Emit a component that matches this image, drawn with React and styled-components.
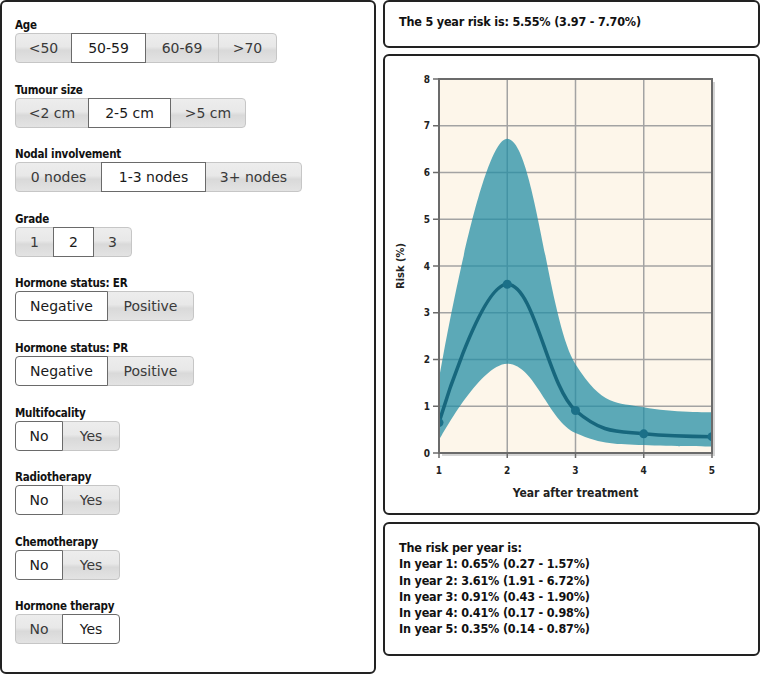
import React from "react";
import styled, { createGlobalStyle } from "styled-components";

const Global = createGlobalStyle`
  html, body { margin: 0; padding: 0; background: #ffffff; }
  * { box-sizing: border-box; }
`;

const Page = styled.div`
  display: flex;
  gap: 7px;
  width: 761px;
  height: 676px;
  font-family: "DejaVu Sans", "Liberation Sans", sans-serif;
`;

const Panel = styled.div`
  border: 2px solid #222;
  border-radius: 6px;
  background: #fff;
`;

const Left = styled(Panel)`
  width: 376px;
  height: 674px;
  padding: 16px 0 0 13px;
  display: flex;
  flex-direction: column;
  gap: 19.6px;
`;

const Right = styled.div`
  width: 377px;
  display: flex;
  flex-direction: column;
`;

const Section = styled.div`
  display: flex;
  flex-direction: column;
  align-items: flex-start;
`;

const Label = styled.div`
  font-family: "DejaVu Sans Condensed", "DejaVu Sans", sans-serif;
  font-weight: bold;
  font-size: 11.5px;
  line-height: 15px;
  color: #111;
  letter-spacing: -0.2px;
`;

const Group = styled.div`
  display: flex;
  height: 30px;
`;

const Btn = styled.div`
  width: ${(p) => p.$w}px;
  height: 30px;
  display: flex;
  align-items: center;
  justify-content: center;
  font-size: 14px;
  color: ${(p) => (p.$on ? "#1a1a1a" : "#3a3a3a")};
  border: 1px solid ${(p) => (p.$on ? "#6a6a6a" : "#c6c6c6")};
  margin-left: ${(p) => (p.$first ? 0 : -1)}px;
  position: relative;
  z-index: ${(p) => (p.$on ? 1 : 0)};
  background: ${(p) =>
    p.$on
      ? "#ffffff"
      : "linear-gradient(#ededed 0%, #e8e8e8 45%, #d9d9d9 58%, #e3e3e3 100%)"};
  border-radius: ${(p) =>
    p.$first ? "4px 0 0 4px" : p.$last ? "0 4px 4px 0" : "0"};
`;

const TopBox = styled(Panel)`
  height: 48px;
  display: flex;
  align-items: center;
  padding: 0 0 3px 14px;
`;

const ChartBox = styled(Panel)`
  height: 461px;
  margin-top: 6px;
  overflow: hidden;
`;

const BottomBox = styled(Panel)`
  height: 134px;
  margin-top: 7px;
  padding: 16px 0 0 14px;
`;

const Strong = styled.div`
  font-family: "DejaVu Sans Condensed", "DejaVu Sans", sans-serif;
  font-weight: bold;
  font-size: 12.5px;
  line-height: 16.3px;
  color: #111;
  letter-spacing: -0.2px;
`;

const sections = [
  { label: "Age", sel: 1, opts: [["<50", 57], ["50-59", 75], ["60-69", 74], [">70", 59]] },
  { label: "Tumour size", sel: 1, opts: [["<2 cm", 74], ["2-5 cm", 83], [">5 cm", 76]] },
  { label: "Nodal involvement", sel: 1, opts: [["0 nodes", 87], ["1-3 nodes", 105], ["3+ nodes", 97]] },
  { label: "Grade", sel: 1, opts: [["1", 39], ["2", 41], ["3", 39]] },
  { label: "Hormone status: ER", sel: 0, opts: [["Negative", 93], ["Positive", 87]] },
  { label: "Hormone status: PR", sel: 0, opts: [["Negative", 93], ["Positive", 87]] },
  { label: "Multifocality", sel: 0, opts: [["No", 48], ["Yes", 58]] },
  { label: "Radiotherapy", sel: 0, opts: [["No", 48], ["Yes", 58]] },
  { label: "Chemotherapy", sel: 0, opts: [["No", 48], ["Yes", 58]] },
  { label: "Hormone therapy", sel: 1, opts: [["No", 48], ["Yes", 58]] },
];

const mean = [0.65, 3.61, 0.91, 0.41, 0.35];
const lower = [0.27, 1.91, 0.43, 0.17, 0.14];
const upper = [1.57, 6.72, 1.9, 0.98, 0.87];

const X = (i) => 54 + i * 68.25;
const Y = (v) => 397 - v * 46.75;

function spline(pts, start = "M") {
  const s = 1.5;
  const den = s + 1;
  const rc = [];
  let d = `${start} ${pts[0][0]} ${pts[0][1]}`;
  for (let i = 1; i < pts.length; i++) {
    const [px, py] = pts[i];
    const [lx, ly] = pts[i - 1];
    const next = pts[i + 1];
    let lcx = px;
    let lcy = py;
    if (next) {
      const [nx, ny] = next;
      lcx = (s * px + lx) / den;
      lcy = (s * py + ly) / den;
      let rcx = (s * px + nx) / den;
      let rcy = (s * py + ny) / den;
      let c = 0;
      if (rcx !== lcx) c = ((rcy - lcy) * (rcx - px)) / (rcx - lcx) + py - rcy;
      lcy += c;
      rcy += c;
      if (lcy > ly && lcy > py) { lcy = Math.max(ly, py); rcy = 2 * py - lcy; }
      else if (lcy < ly && lcy < py) { lcy = Math.min(ly, py); rcy = 2 * py - lcy; }
      if (rcy > ny && rcy > py) { rcy = Math.max(ny, py); lcy = 2 * py - rcy; }
      else if (rcy < ny && rcy < py) { rcy = Math.min(ny, py); lcy = 2 * py - rcy; }
      rc[i] = [rcx, rcy];
    }
    const prev = rc[i - 1] || [lx, ly];
    d += ` C ${prev[0]} ${prev[1]} ${lcx} ${lcy} ${px} ${py}`;
  }
  return d;
}

const pts = (arr) => arr.map((v, i) => [X(i), Y(v)]);

function Chart() {
  const up = pts(upper);
  const lo = pts(lower).reverse();
  const band = spline(up) + " " + spline(lo, "L") + " Z";
  const line = spline(pts(mean));
  const left = X(0);
  const right = X(4);
  const top = Y(8);
  const bottom = Y(0);
  const axisText = {
    fontFamily: '"DejaVu Sans Condensed", "DejaVu Sans", sans-serif',
    fontWeight: "bold",
    fill: "#222",
  };
  return (
    <svg width="373" height="457" viewBox="0 0 373 457">
      <defs>
        <clipPath id="plot">
          <rect x={left} y={top} width={right - left} height={bottom - top} />
        </clipPath>
      </defs>
      <rect x={left + 3} y={top + 3} width={right - left} height={bottom - top} fill="#d4d4d4" />
      <rect x={left} y={top} width={right - left} height={bottom - top} fill="#fdf6ea" />
      {[1, 2, 3, 4, 5, 6, 7].map((v) => (
        <line key={"h" + v} x1={left} x2={right} y1={Y(v)} y2={Y(v)} stroke="#a3a3a3" strokeWidth="1.5" />
      ))}
      {[1, 2, 3].map((i) => (
        <line key={"v" + i} x1={X(i)} x2={X(i)} y1={top} y2={bottom} stroke="#a3a3a3" strokeWidth="1.5" />
      ))}
      <g clipPath="url(#plot)">
        <path d={band} fill="#238ea5" fillOpacity="0.74" />
        <path d={line} fill="none" stroke="#17677d" strokeWidth="3.5" strokeLinecap="round" />
        {mean.map((v, i) => (
          <circle key={i} cx={X(i)} cy={Y(v)} r="4.5" fill="#1b7088" />
        ))}
      </g>
      <rect x={left} y={top} width={right - left} height={bottom - top} fill="none" stroke="#6b6b6b" strokeWidth="2" />
      {[0, 1, 2, 3, 4, 5, 6, 7, 8].map((v) => (
        <g key={"y" + v}>
          <line x1={left - 6} x2={left} y1={Y(v)} y2={Y(v)} stroke="#6b6b6b" strokeWidth="1.5" />
          <text x={left - 9} y={Y(v) + 3.5} textAnchor="end" fontSize="10" style={axisText}>
            {v}
          </text>
        </g>
      ))}
      {[0, 1, 2, 3, 4].map((i) => (
        <g key={"x" + i}>
          <line x1={X(i)} x2={X(i)} y1={bottom} y2={bottom + 5} stroke="#6b6b6b" strokeWidth="1.5" />
          <text x={X(i)} y={bottom + 21} textAnchor="middle" fontSize="10" style={axisText}>
            {i + 1}
          </text>
        </g>
      ))}
      <text x={(left + right) / 2} y={bottom + 44} textAnchor="middle" fontSize="12" style={axisText}>
        Year after treatment
      </text>
      <text
        transform={`translate(19 ${(top + bottom) / 2}) rotate(-90)`}
        textAnchor="middle"
        fontSize="11"
        style={axisText}
      >
        Risk (%)
      </text>
    </svg>
  );
}

export default function App() {
  return (
    <>
      <Global />
      <Page>
        <Left>
          {sections.map((s) => (
            <Section key={s.label}>
              <Label>{s.label}</Label>
              <Group>
                {s.opts.map(([t, w], i) => (
                  <Btn
                    key={t}
                    $w={w}
                    $on={i === s.sel}
                    $first={i === 0}
                    $last={i === s.opts.length - 1}
                  >
                    {t}
                  </Btn>
                ))}
              </Group>
            </Section>
          ))}
        </Left>
        <Right>
          <TopBox>
            <Strong>The 5 year risk is: 5.55% (3.97 - 7.70%)</Strong>
          </TopBox>
          <ChartBox>
            <Chart />
          </ChartBox>
          <BottomBox>
            <Strong>The risk per year is:</Strong>
            {mean.map((m, i) => (
              <Strong key={i}>
                In year {i + 1}: {m.toFixed(2)}% ({lower[i].toFixed(2)} - {upper[i].toFixed(2)}%)
              </Strong>
            ))}
          </BottomBox>
        </Right>
      </Page>
    </>
  );
}
